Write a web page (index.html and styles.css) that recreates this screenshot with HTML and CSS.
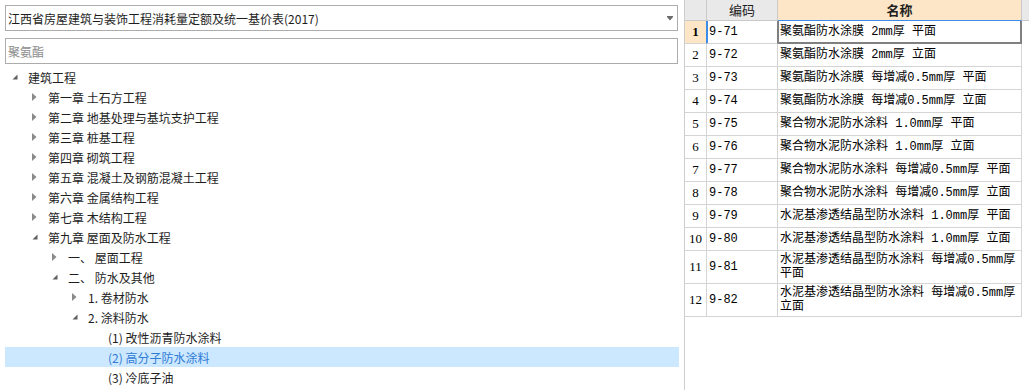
FILE: index.html
```html
<!DOCTYPE html>
<html lang="zh-CN">
<head>
<meta charset="utf-8">
<title>定额</title>
<link rel="stylesheet" href="styles.css">
</head>
<body>
<div class="app">
  <div class="left">
    <div class="select">
      <span class="select-text">江西省房屋建筑与装饰工程消耗量定额及统一基价表(2017)</span>
      <svg class="caret" width="6" height="5" viewBox="0 0 6 5"><path d="M0 0H6V1L3 4.5L0 1Z" fill="#6b6b6b"/></svg>
    </div>
    <div class="search"><span class="placeholder">聚氨酯</span></div>
    <ul class="tree">
      <li class="row l0"><span class="tw"><svg width="6" height="6" viewBox="0 0 6 6"><path d="M5.5 0.5V5.5H0.5Z" fill="#5f5f5f"/></svg></span><span>建筑工程</span></li>
      <li class="row l1"><span class="tw"><svg width="5" height="8" viewBox="0 0 5 8"><path d="M0 0L4.5 4L0 8Z" fill="#8a8a8a"/></svg></span><span>第一章 土石方工程</span></li>
      <li class="row l1"><span class="tw"><svg width="5" height="8" viewBox="0 0 5 8"><path d="M0 0L4.5 4L0 8Z" fill="#8a8a8a"/></svg></span><span>第二章 地基处理与基坑支护工程</span></li>
      <li class="row l1"><span class="tw"><svg width="5" height="8" viewBox="0 0 5 8"><path d="M0 0L4.5 4L0 8Z" fill="#8a8a8a"/></svg></span><span>第三章 桩基工程</span></li>
      <li class="row l1"><span class="tw"><svg width="5" height="8" viewBox="0 0 5 8"><path d="M0 0L4.5 4L0 8Z" fill="#8a8a8a"/></svg></span><span>第四章 砌筑工程</span></li>
      <li class="row l1"><span class="tw"><svg width="5" height="8" viewBox="0 0 5 8"><path d="M0 0L4.5 4L0 8Z" fill="#8a8a8a"/></svg></span><span>第五章 混凝土及钢筋混凝土工程</span></li>
      <li class="row l1"><span class="tw"><svg width="5" height="8" viewBox="0 0 5 8"><path d="M0 0L4.5 4L0 8Z" fill="#8a8a8a"/></svg></span><span>第六章 金属结构工程</span></li>
      <li class="row l1"><span class="tw"><svg width="5" height="8" viewBox="0 0 5 8"><path d="M0 0L4.5 4L0 8Z" fill="#8a8a8a"/></svg></span><span>第七章 木结构工程</span></li>
      <li class="row l1"><span class="tw"><svg width="6" height="6" viewBox="0 0 6 6"><path d="M5.5 0.5V5.5H0.5Z" fill="#5f5f5f"/></svg></span><span>第九章 屋面及防水工程</span></li>
      <li class="row l2"><span class="tw"><svg width="5" height="8" viewBox="0 0 5 8"><path d="M0 0L4.5 4L0 8Z" fill="#8a8a8a"/></svg></span><span>一、 屋面工程</span></li>
      <li class="row l2"><span class="tw"><svg width="6" height="6" viewBox="0 0 6 6"><path d="M5.5 0.5V5.5H0.5Z" fill="#5f5f5f"/></svg></span><span>二、 防水及其他</span></li>
      <li class="row l3"><span class="tw"><svg width="5" height="8" viewBox="0 0 5 8"><path d="M0 0L4.5 4L0 8Z" fill="#8a8a8a"/></svg></span><span>1. 卷材防水</span></li>
      <li class="row l3"><span class="tw"><svg width="6" height="6" viewBox="0 0 6 6"><path d="M5.5 0.5V5.5H0.5Z" fill="#5f5f5f"/></svg></span><span>2. 涂料防水</span></li>
      <li class="row l4"><span class="tw"></span><span>(1) 改性沥青防水涂料</span></li>
      <li class="row l4 selected"><span class="tw"></span><span>(2) 高分子防水涂料</span></li>
      <li class="row l4"><span class="tw"></span><span>(3) 冷底子油</span></li>
    </ul>
  </div>
  <div class="right">
    <table class="grid">
      <colgroup><col class="c-num"><col class="c-code"><col class="c-name"><col class="c-fill"></colgroup>
      <thead>
        <tr><th class="h-num"></th><th class="h-code">编码</th><th class="h-name">名称</th><th class="h-fill"></th></tr>
      </thead>
      <tbody>
        <tr class="cur"><td class="num">1</td><td class="code">9-71</td><td class="name sel">聚氨酯防水涂膜 2mm厚 平面</td><td class="fill"></td></tr>
        <tr><td class="num">2</td><td class="code">9-72</td><td class="name">聚氨酯防水涂膜 2mm厚 立面</td><td class="fill"></td></tr>
        <tr><td class="num">3</td><td class="code">9-73</td><td class="name">聚氨酯防水涂膜 每增减0.5mm厚 平面</td><td class="fill"></td></tr>
        <tr><td class="num">4</td><td class="code">9-74</td><td class="name">聚氨酯防水涂膜 每增减0.5mm厚 立面</td><td class="fill"></td></tr>
        <tr><td class="num">5</td><td class="code">9-75</td><td class="name">聚合物水泥防水涂料 1.0mm厚 平面</td><td class="fill"></td></tr>
        <tr><td class="num">6</td><td class="code">9-76</td><td class="name">聚合物水泥防水涂料 1.0mm厚 立面</td><td class="fill"></td></tr>
        <tr><td class="num">7</td><td class="code">9-77</td><td class="name">聚合物水泥防水涂料 每增减0.5mm厚 平面</td><td class="fill"></td></tr>
        <tr><td class="num">8</td><td class="code">9-78</td><td class="name">聚合物水泥防水涂料 每增减0.5mm厚 立面</td><td class="fill"></td></tr>
        <tr><td class="num">9</td><td class="code">9-79</td><td class="name">水泥基渗透结晶型防水涂料 1.0mm厚 平面</td><td class="fill"></td></tr>
        <tr><td class="num">10</td><td class="code">9-80</td><td class="name">水泥基渗透结晶型防水涂料 1.0mm厚 立面</td><td class="fill"></td></tr>
        <tr><td class="num">11</td><td class="code">9-81</td><td class="name">水泥基渗透结晶型防水涂料 每增减0.5mm厚 平面</td><td class="fill"></td></tr>
        <tr><td class="num">12</td><td class="code">9-82</td><td class="name">水泥基渗透结晶型防水涂料 每增减0.5mm厚 立面</td><td class="fill"></td></tr>
      </tbody>
    </table>
  </div>
</div>
</body>
</html>
```
FILE: styles.css
```css
html, body {
  margin: 0;
  padding: 0;
  background: #ffffff;
}
body {
  font-family: "Noto Sans CJK SC", "Noto Sans", sans-serif;
  font-size: 12px;
  color: #1e1e1e;
}
.app {
  display: flex;
  height: 390px;
  overflow: hidden;
}
.left {
  width: 684px;
  flex: none;
  box-sizing: border-box;
  padding: 5px 6px 0 5px;
  display: flex;
  flex-direction: column;
}
.select {
  height: 26px;
  box-sizing: border-box;
  border: 1px solid #acacac;
  display: flex;
  align-items: center;
  justify-content: space-between;
  padding: 0 4px 0 2px;
  white-space: nowrap;
}
.caret {
  display: block;
  margin-top: 1px;
}
.search {
  margin-top: 7px;
  height: 26px;
  box-sizing: border-box;
  border: 1px solid #acacac;
  display: flex;
  align-items: center;
  padding-left: 2px;
}
.placeholder {
  color: #8c8c8c;
}
.tree {
  list-style: none;
  margin: 3px -1px 0 0;
  padding: 0;
}
.row {
  height: 20px;
  display: flex;
  align-items: center;
  white-space: nowrap;
}
.tw {
  flex: none;
  width: 16px;
  height: 20px;
  margin-left: 7px;
  display: flex;
  align-items: center;
}
.tw svg { display: block; }
.l1 { padding-left: 20px; }
.l2 { padding-left: 40px; }
.l3 { padding-left: 60px; }
.l4 { padding-left: 80px; }
.row.selected {
  background: #cce8ff;
  color: #2f7bd6;
}

.right {
  flex: 1;
  border-left: 1px solid #cdcdcd;
  min-width: 0;
}
.grid {
  border-collapse: separate;
  border-spacing: 0;
  table-layout: fixed;
  width: 344px;
}
.c-num { width: 22px; }
.c-code { width: 71px; }
.c-name { width: 244px; }
.c-fill { width: 7px; }
.grid th, .grid td {
  border-right: 1px solid #d4d4d4;
  border-bottom: 1px solid #d4d4d4;
  padding: 0;
  box-sizing: border-box;
}
.grid thead tr { height: 21px; }
.grid th {
  background: #e9e9e9;
  font-size: 13px;
  font-weight: normal;
  line-height: 20px;
  text-align: center;
  color: #1e1e1e;
  border-color: #c9c9c9;
}
.grid th.h-name {
  background: #fde6c8;
  font-weight: bold;
  border-bottom-color: #3d8de8;
}
.grid th.h-fill {
  border-right: none;
}
.grid tbody tr { height: 23px; }
.grid td {
  padding: 2px 2px;
  line-height: 14px;
  vertical-align: middle;
  color: #000;
}
.grid td.num {
  text-align: center;
  font-family: "Liberation Serif", "DejaVu Serif", serif;
  font-size: 13px;
  padding: 2px 0;
}
.grid td.code {
  font-family: "Liberation Mono", "DejaVu Sans Mono", monospace;
  font-size: 12px;
}
.grid td.name {
  font-family: "Liberation Mono", "Noto Sans CJK SC", monospace;
  font-size: 12px;
  padding-left: 2px;
}
.grid td.fill {
  border: none;
  background: #fff;
}
.cur td.num {
  background: #fde6c8;
  font-weight: bold;
  border-right-color: #3d8de8;
}
.cur td.code {
  box-shadow: inset 1px 0 0 #3d8de8;
  border-right-color: #808080;
}
.cur td.sel {
  border-right-color: #808080;
  border-bottom-color: #808080;
  box-shadow: inset 1px 0 0 #808080, inset -1px -1px 0 #808080;
}
```
